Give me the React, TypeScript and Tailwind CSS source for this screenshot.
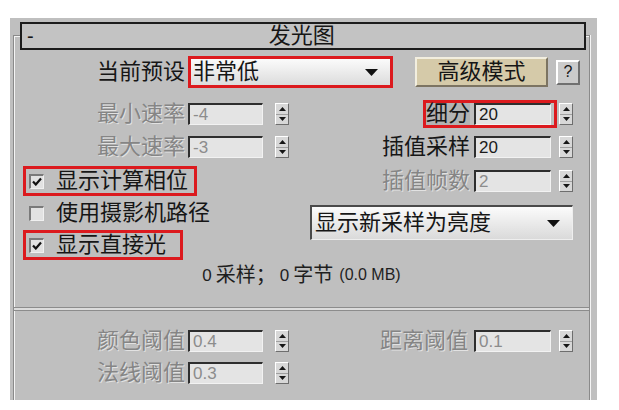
import type { ReactNode } from 'react'

const font = "font-['Liberation_Sans','Noto_Sans_CJK_SC',sans-serif]"
const dim = 'text-[#858585] [text-shadow:1px_1px_0_#e2e2e2]'

function Spinner() {
  return (
    <div className="flex h-[22px] w-[14px] flex-col border border-t-white border-l-white border-b-[#6e6e6e] border-r-[#6e6e6e] bg-[#d8d8d8]">
      <div className="flex flex-1 items-center justify-center">
        <svg width="7" height="4" viewBox="0 0 7 4">
          <path d="M0 4 L3.5 0 L7 4Z" fill="#161616" />
        </svg>
      </div>
      <div className="h-px bg-[#a0a0a0]" />
      <div className="flex flex-1 items-center justify-center">
        <svg width="7" height="4" viewBox="0 0 7 4">
          <path d="M0 0 L3.5 4 L7 0Z" fill="#161616" />
        </svg>
      </div>
    </div>
  )
}

function Field({ value, disabled, className }: { value: string; disabled?: boolean; className?: string }) {
  return (
    <div
      className={`flex h-[22px] items-center border-t-2 border-l-2 border-b border-r border-t-[#2e2e2e] border-l-[#2e2e2e] border-b-[#f2f2f2] border-r-[#f2f2f2] bg-[#e4e4e4] pl-[3px] text-[17px] leading-none ${
        disabled ? 'text-[#8c8c8c]' : 'text-[#1a1a1a]'
      } ${className ?? ''}`}
    >
      {value}
    </div>
  )
}

function Label({ children, disabled, className }: { children: ReactNode; disabled?: boolean; className?: string }) {
  return (
    <span className={`text-right text-[22px] leading-none ${disabled ? dim : 'text-[#161616]'} ${className ?? ''}`}>
      {children}
    </span>
  )
}

function Check({ checked }: { checked?: boolean }) {
  return (
    <div className="flex h-[15px] w-[15px] items-center justify-center border-t-2 border-l-2 border-b border-r border-t-[#7a7a7a] border-l-[#7a7a7a] border-b-[#f0f0f0] border-r-[#f0f0f0] bg-[#e2e2e2]">
      {checked && (
        <svg width="10" height="9" viewBox="0 0 10 9">
          <path d="M1 4.5 L3.8 7.5 L9 1.5" fill="none" stroke="#111" strokeWidth="2.2" />
        </svg>
      )}
    </div>
  )
}

function CheckRow({ label, checked, marked, width }: { label: string; checked?: boolean; marked?: boolean; width: number }) {
  return (
    <div
      className={`ml-[9px] flex h-[30px] items-center border-[3px] pl-[3px] ${marked ? 'border-[#dc1a1e]' : 'border-transparent'}`}
      style={{ width }}
    >
      <Check checked={checked} />
      <span className="ml-[12px] text-[22px] leading-none text-[#161616]">{label}</span>
    </div>
  )
}

function LeftRow({ label, value, disabled }: { label: string; value: string; disabled?: boolean }) {
  return (
    <div className="flex h-[28px] items-center">
      <Label disabled={disabled} className="w-[171px]">
        {label}
      </Label>
      <Field value={value} disabled={disabled} className="ml-[3px] w-[75px]" />
      <div className="ml-[12px]">
        <Spinner />
      </div>
    </div>
  )
}

function RightRow({ label, value, disabled }: { label: string; value: string; disabled?: boolean }) {
  return (
    <div className="flex h-[28px] items-center">
      <Label disabled={disabled} className="w-[170px]">
        {label}
      </Label>
      <Field value={value} disabled={disabled} className="ml-[4px] w-[77px]" />
      <div className="ml-[8px]">
        <Spinner />
      </div>
    </div>
  )
}

function DownArrow({ className }: { className?: string }) {
  return (
    <svg width="13" height="7" viewBox="0 0 13 7" className={className}>
      <path d="M0 0 L13 0 L6.5 7Z" fill="#111" />
    </svg>
  )
}

export default function App() {
  return (
    <div className={`min-h-screen bg-white ${font}`}>
      <div className="ml-[10px] pt-[18px]">
        <div className="h-[382px] w-[587px] bg-[#bfbfbf] pl-[3px] pr-[7px] pt-[17px]">
          {/* groove frame */}
          <div className="h-full border-l border-t border-r border-[#8a8a8a] shadow-[inset_1px_1px_0_#f4f4f4,1px_0_0_#f4f4f4]">
            {/* rollout header */}
            <div className="relative -mt-[14px] ml-[6px] flex h-[28px] w-[566px] items-center border-2 border-[#1c1c1c] bg-[#c3c3c3]">
              <span className="ml-[5px] text-[20px] leading-none text-[#161616]">-</span>
              <span className="flex-1 pr-[14px] text-center text-[22px] leading-none text-[#161616]">发光图</span>
            </div>

            {/* preset row */}
            <div className="mt-[6px] flex h-[32px] items-center">
              <Label className="w-[171px]">当前预设</Label>
              <div className="ml-[3px] flex h-[32px] w-[205px] items-center border-[3px] border-[#dc1a1e] bg-gradient-to-b from-[#fbfbfb] to-[#dcdcdc] pl-[2px]">
                <span className="flex-1 text-[22px] leading-none text-[#161616]">非常低</span>
                <DownArrow className="mr-[12px]" />
              </div>
              <div className="ml-[22px] flex h-[30px] w-[133px] items-center justify-center border-2 border-t-[#f2eedf] border-l-[#f2eedf] border-b-[#7c7462] border-r-[#7c7462] bg-[#d5caa9] text-[22px] leading-none text-[#161616]">
                高级模式
              </div>
              <div className="ml-[8px] flex h-[25px] w-[24px] items-center justify-center border-2 border-t-white border-l-white border-b-[#707070] border-r-[#707070] bg-[#cbcbcb] text-[16px] leading-none text-[#161616]">
                ?
              </div>
            </div>

            {/* main controls */}
            <div className="flex">
              <div className="flex w-[286px] flex-col">
                <div className="mt-[12px]">
                  <LeftRow label="最小速率" value="-4" disabled />
                </div>
                <div className="mt-[5px]">
                  <LeftRow label="最大速率" value="-3" disabled />
                </div>
                <div className="mt-[5px]">
                  <CheckRow label="显示计算相位" checked marked width={174} />
                </div>
                <div className="mt-[2px]">
                  <CheckRow label="使用摄影机路径" width={200} />
                </div>
                <div className="mt-[2px]">
                  <CheckRow label="显示直接光" checked marked width={160} />
                </div>
              </div>
              <div className="flex flex-1 flex-col">
                <div className="mt-[12px] flex h-[28px] items-center">
                  <div className="ml-[123px] flex h-[28px] items-center border-[3px] border-[#dc1a1e]">
                    <span className="flex h-[22px] w-[44px] items-center justify-end bg-[#b3b3b3] text-[22px] leading-none text-[#161616]">
                      细分
                    </span>
                    <Field value="20" className="ml-[4px] mr-[3px] w-[77px]" />
                  </div>
                  <div className="ml-[2px]">
                    <Spinner />
                  </div>
                </div>
                <div className="mt-[5px]">
                  <RightRow label="插值采样" value="20" />
                </div>
                <div className="mt-[6px]">
                  <RightRow label="插值帧数" value="2" disabled />
                </div>
                <div className="ml-[10px] mt-[10px] flex h-[35px] w-[263px] items-center border-t-2 border-l-2 border-b border-r border-t-[#4a4a4a] border-l-[#4a4a4a] border-b-[#eeeeee] border-r-[#eeeeee] bg-gradient-to-b from-[#fbfbfb] to-[#dadada] pl-[3px]">
                  <span className="flex-1 text-[22px] leading-none text-[#161616]">显示新采样为亮度</span>
                  <DownArrow className="mr-[12px]" />
                </div>
              </div>
            </div>

            {/* memory readout */}
            <div className="mt-[3px] flex h-[24px] items-center justify-center text-[#1e1e1e]">
              <span className="text-[17px] leading-none">0 </span>
              <span className="ml-[4px] text-[20px] leading-none">采样；</span>
              <span className="ml-[4px] text-[17px] leading-none">0 </span>
              <span className="ml-[4px] text-[20px] leading-none">字节</span>
              <span className="ml-[6px] text-[16px] leading-none">(0.0 MB)</span>
            </div>

            {/* separator */}
            <div className="mt-[20px] h-[4px] border-y border-[#8c8c8c] bg-[#dcdcdc]" />

            {/* thresholds */}
            <div className="flex">
              <div className="flex w-[286px] flex-col">
                <div className="mt-[16px]">
                  <LeftRow label="颜色阈值" value="0.4" disabled />
                </div>
                <div className="mt-[4px]">
                  <LeftRow label="法线阈值" value="0.3" disabled />
                </div>
              </div>
              <div className="flex flex-1 flex-col">
                <div className="mt-[16px] flex h-[28px] items-center">
                  <Label disabled className="w-[168px]">
                    距离阈值
                  </Label>
                  <Field value="0.1" disabled className="ml-[6px] w-[77px]" />
                  <div className="ml-[8px]">
                    <Spinner />
                  </div>
                </div>
              </div>
            </div>
          </div>
        </div>
      </div>
    </div>
  )
}
